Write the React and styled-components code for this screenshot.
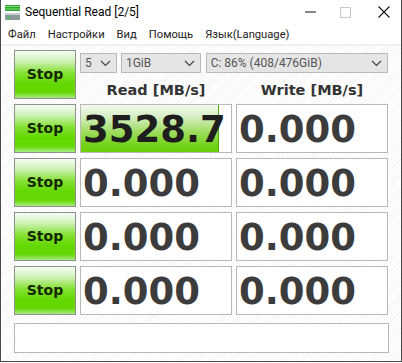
import React from "react";
import styled, { createGlobalStyle } from "styled-components";

const Global = createGlobalStyle`
  html, body { margin: 0; padding: 0; background: #fff; }
  body { width: 402px; height: 363px; overflow: hidden; }
`;

const Window = styled.div`
  box-sizing: border-box;
  width: 402px;
  height: 362px;
  border: 1px solid #4a4a4a;
  border-top: none;
  background: #fff;
  display: flex;
  flex-direction: column;
  font-family: Roboto, "Noto Sans", sans-serif;
`;

const TitleBar = styled.div`
  height: 24px;
  display: flex;
  align-items: center;
  padding-left: 3px;
  font-size: 12px;
  color: #000;
`;

const Title = styled.span`
  flex: 1;
  margin-left: 4px;
`;

const Ctrl = styled.div`
  width: 34px;
  height: 24px;
  display: flex;
  align-items: center;
  justify-content: center;
  margin-left: ${(p) => p.$gap || 0}px;
`;

const MenuBar = styled.div`
  height: 20px;
  display: flex;
  align-items: center;
  font-size: 11.2px;
  color: #222;
  padding-left: 7px;
  border-bottom: 2px solid #f0f0f0;
`;

const MenuItem = styled.span`
  margin-right: ${(p) => p.$mr || 0}px;
`;

const Content = styled.div`
  flex: 1;
  padding: 4px 12px 0 13px;
  background: repeating-linear-gradient(
    135deg,
    #ffffff 0 2px,
    #f5f5f5 2px 3px
  );
`;

const Grid = styled.div`
  display: grid;
  grid-template-columns: 62px 152px 152px;
  grid-auto-rows: 49px;
  column-gap: 4px;
  row-gap: 5px;
`;

const StopButton = styled.div`
  box-sizing: border-box;
  border: 1px solid #8f8f8f;
  background: linear-gradient(
    to bottom,
    #f6fcf3 0%,
    #d2f3bc 20%,
    #86e236 46%,
    #62d800 70%,
    #66d806 88%,
    #a8ea80 100%
  );
  display: flex;
  align-items: center;
  justify-content: center;
  font-family: "DejaVu Sans", Verdana, sans-serif;
  font-weight: bold;
  font-size: 14px;
  color: #142800;
  padding-bottom: 1px;
`;

const Header = styled.div`
  grid-column: 2 / 4;
  display: flex;
  flex-direction: column;
`;

const Selects = styled.div`
  display: flex;
  margin-top: 3px;
  height: 20px;
`;

const Select = styled.div`
  box-sizing: border-box;
  width: ${(p) => p.$w}px;
  margin-left: ${(p) => p.$ml || 0}px;
  height: 20px;
  background: #e5e5e5;
  border: 1px solid #b9b9b9;
  display: flex;
  align-items: center;
  justify-content: space-between;
  padding: 0 5px 0 4px;
  font-size: 12px;
  color: #555;
`;

const Labels = styled.div`
  display: grid;
  grid-template-columns: 152px 152px;
  column-gap: 4px;
  flex: 1;
`;

const Label = styled.div`
  display: flex;
  align-items: center;
  justify-content: center;
  font-family: "DejaVu Sans", Verdana, sans-serif;
  font-weight: bold;
  font-size: 14.5px;
  color: #333;
  padding-top: 7px;
`;

const Cell = styled.div`
  position: relative;
  box-sizing: border-box;
  border: 1px solid #b8b8b8;
  background: #fff;
  overflow: hidden;
  display: flex;
  align-items: center;
  padding-left: 2px;
`;

const Bar = styled.div`
  position: absolute;
  left: 0;
  top: 0;
  bottom: 0;
  border-right: 1px solid #4caa10;
  background: linear-gradient(
    to bottom,
    #f3f8f0 0%,
    #d6efc4 25%,
    #a2de66 55%,
    #74d31a 85%,
    #6ad00a 100%
  );
`;

const Value = styled.span`
  position: relative;
  font-family: "DejaVu Sans", Verdana, sans-serif;
  font-weight: bold;
  font-size: 37px;
  line-height: 1;
  margin-top: 2px;
  color: ${(p) => (p.$dark ? "#1e1e1e" : "#3c3c3c")};
  white-space: nowrap;
`;

const Comment = styled.div`
  box-sizing: border-box;
  margin-top: 8px;
  width: 375px;
  height: 30px;
  border: 1px solid #b8b8b8;
  background: #fff;
`;

const Chevron = () => (
  <svg width="11" height="7" viewBox="0 0 11 7">
    <path d="M1 1 L5.5 5.5 L10 1" fill="none" stroke="#444" strokeWidth="1.2" />
  </svg>
);

const AppIcon = () => (
  <svg width="17" height="17" viewBox="0 0 17 17">
    <rect x="1" y="1" width="15" height="6" fill="#2fa82f" />
    <rect x="1" y="2" width="15" height="1" fill="#7ad97a" />
    <rect x="1" y="4.5" width="15" height="1" fill="#7ad97a" />
    <rect x="1" y="9" width="15" height="7" rx="1" fill="#8a9a9a" />
    <rect x="1" y="9" width="15" height="2" fill="#c5d0d0" />
    <rect x="3" y="13" width="3" height="1.5" fill="#3c3" />
  </svg>
);

const menu = [
  { t: "Файл", mr: 12 },
  { t: "Настройки", mr: 12 },
  { t: "Вид", mr: 12 },
  { t: "Помощь", mr: 12 },
  { t: "Язык(Language)" },
];

const rows = [
  { read: "3528.7", write: "0.000", bar: 137 },
  { read: "0.000", write: "0.000" },
  { read: "0.000", write: "0.000" },
  { read: "0.000", write: "0.000" },
];

export default function App() {
  return (
    <Window>
      <Global />
      <TitleBar>
        <AppIcon />
        <Title>Sequential Read [2/5]</Title>
        <Ctrl>
          <svg width="12" height="2"><rect width="11" height="1" y="0.5" fill="#111" /></svg>
        </Ctrl>
        <Ctrl>
          <svg width="11" height="11"><rect x="0.5" y="0.5" width="10" height="10" fill="none" stroke="#c8c8c8" /></svg>
        </Ctrl>
        <Ctrl $gap={5}>
          <svg width="12" height="12"><path d="M0.5 0.5 L11.5 11.5 M11.5 0.5 L0.5 11.5" stroke="#111" strokeWidth="1.1" /></svg>
        </Ctrl>
      </TitleBar>
      <MenuBar>
        {menu.map((m) => (
          <MenuItem key={m.t} $mr={m.mr}>{m.t}</MenuItem>
        ))}
      </MenuBar>
      <Content>
        <Grid>
          <StopButton>Stop</StopButton>
          <Header>
            <Selects>
              <Select $w={37}>5 <Chevron /></Select>
              <Select $w={80} $ml={4}>1GiB <Chevron /></Select>
              <Select $w={183} $ml={5}>C: 86% (408/476GiB) <Chevron /></Select>
            </Selects>
            <Labels>
              <Label>Read [MB/s]</Label>
              <Label>Write [MB/s]</Label>
            </Labels>
          </Header>
          {rows.map((r, i) => (
            <React.Fragment key={i}>
              <StopButton>Stop</StopButton>
              <Cell>
                {r.bar && <Bar style={{ width: r.bar }} />}
                <Value $dark={!!r.bar}>{r.read}</Value>
              </Cell>
              <Cell>
                <Value>{r.write}</Value>
              </Cell>
            </React.Fragment>
          ))}
        </Grid>
        <Comment />
      </Content>
    </Window>
  );
}
